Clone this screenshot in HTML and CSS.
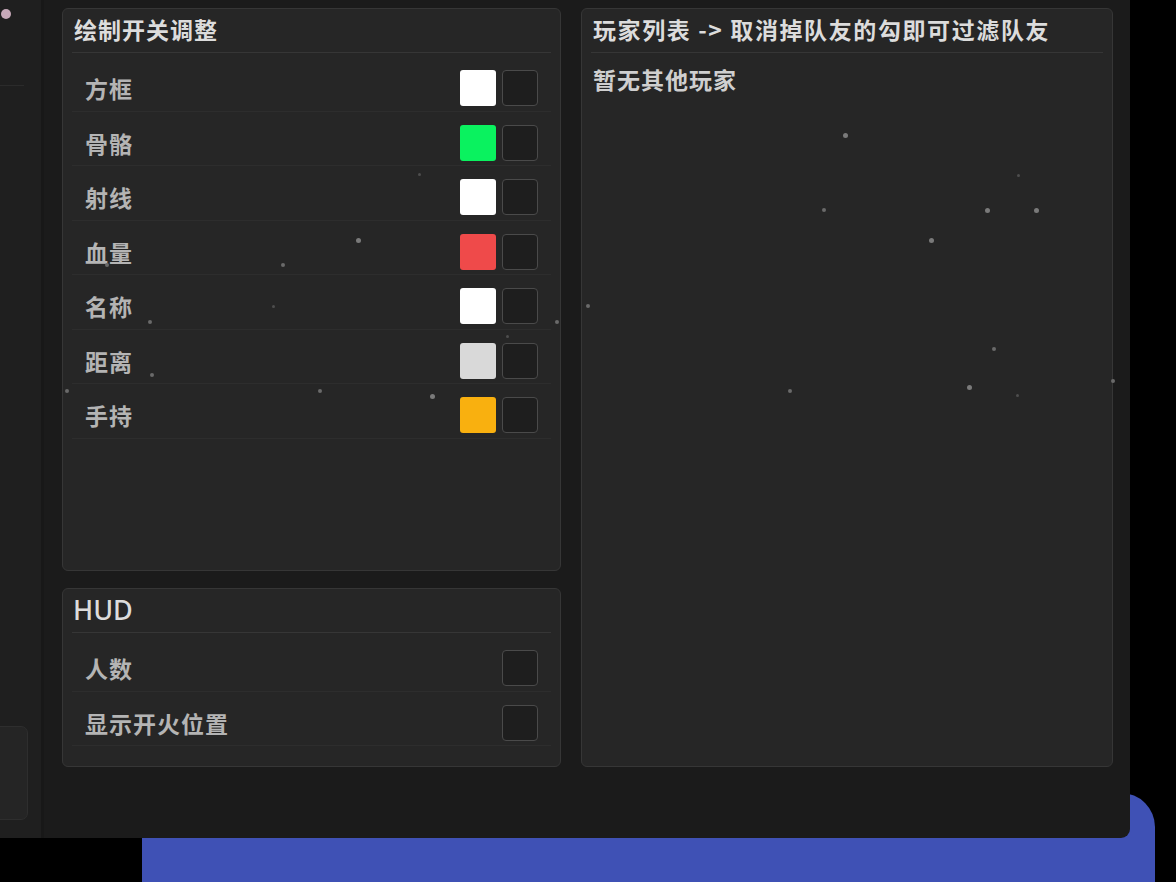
FILE: index.html
```html
<!DOCTYPE html>
<html lang="zh-CN">
<head>
<meta charset="utf-8">
<title>设置</title>
<link rel="stylesheet" href="styles.css">
</head>
<body>
<div class="stage">
  <div class="backcard"></div>
  <div class="window">
    <aside class="sidebar">
      <span class="sb-dot"></span>
      <span class="sb-divider"></span>
      <span class="sb-spacer"></span>
      <span class="sb-box"></span>
    </aside>
    <main class="content">
      <section class="panel panel-draw">
        <header class="panel-head"><h2 class="panel-title">绘制开关调整</h2></header>
        <ul class="rows">
          <li class="row"><span class="label">方框</span><span class="swatch" style="background:#ffffff"></span><span class="check"></span></li>
          <li class="row"><span class="label">骨骼</span><span class="swatch" style="background:#0af25f"></span><span class="check"></span></li>
          <li class="row"><span class="label">射线</span><span class="swatch" style="background:#ffffff"></span><span class="check"></span></li>
          <li class="row"><span class="label">血量</span><span class="swatch" style="background:#ef4a4a"></span><span class="check"></span></li>
          <li class="row"><span class="label">名称</span><span class="swatch" style="background:#ffffff"></span><span class="check"></span></li>
          <li class="row"><span class="label">距离</span><span class="swatch" style="background:#d9d9d9"></span><span class="check"></span></li>
          <li class="row"><span class="label">手持</span><span class="swatch" style="background:#f9b00f"></span><span class="check"></span></li>
        </ul>
      </section>
      <section class="panel panel-hud">
        <header class="panel-head"><h2 class="panel-title title-latin">HUD</h2></header>
        <ul class="rows">
          <li class="row"><span class="label">人数</span><span class="check"></span></li>
          <li class="row"><span class="label">显示开火位置</span><span class="check"></span></li>
        </ul>
      </section>
      <section class="panel panel-players">
        <header class="panel-head"><h2 class="panel-title title-wide">玩家列表 -&gt; 取消掉队友的勾即可过滤队友</h2></header>
        <p class="empty">暂无其他玩家</p>
      </section>
    </main>
    <div class="particles">
      <i class="p" style="left:845px;top:135px"></i>
      <i class="p sm" style="left:824px;top:210px"></i>
      <i class="p" style="left:987px;top:210px"></i>
      <i class="p" style="left:1036px;top:210px"></i>
      <i class="p" style="left:931px;top:240px"></i>
      <i class="p sm" style="left:994px;top:349px"></i>
      <i class="p" style="left:969px;top:387px"></i>
      <i class="p sm" style="left:790px;top:391px"></i>
      <i class="p sm" style="left:1113px;top:381px"></i>
      <i class="p xs" style="left:1019px;top:176px"></i>
      <i class="p xs" style="left:1018px;top:396px"></i>
      <i class="p" style="left:358px;top:240px"></i>
      <i class="p sm" style="left:283px;top:265px"></i>
      <i class="p sm" style="left:107px;top:265px"></i>
      <i class="p sm" style="left:150px;top:322px"></i>
      <i class="p xs" style="left:274px;top:307px"></i>
      <i class="p sm" style="left:152px;top:375px"></i>
      <i class="p sm" style="left:320px;top:391px"></i>
      <i class="p" style="left:432px;top:396px"></i>
      <i class="p sm" style="left:67px;top:391px"></i>
      <i class="p sm" style="left:557px;top:322px"></i>
      <i class="p sm" style="left:588px;top:306px"></i>
      <i class="p xs" style="left:508px;top:337px"></i>
      <i class="p xs" style="left:420px;top:175px"></i>
    </div>
  </div>
</div>
</body>
</html>
```
FILE: styles.css
```css
* { box-sizing: border-box; }
html, body { margin: 0; padding: 0; }
body {
  background: #000;
  width: 1176px;
  height: 882px;
  overflow: hidden;
  font-family: "Noto Sans CJK SC", "Noto Sans", sans-serif;
}
.stage {
  position: relative;
  width: 1176px;
  height: 882px;
  overflow: hidden;
}
.backcard {
  position: absolute;
  left: 142px;
  top: 793px;
  width: 1013px;
  height: 89px;
  background: #3f51b5;
  border-top-right-radius: 34px;
}
.window {
  position: relative;
  width: 1130px;
  height: 838px;
  background: #1b1b1b;
  border-bottom-right-radius: 9px;
  display: flex;
  overflow: hidden;
}
.sidebar {
  width: 44px;
  flex: none;
  background: #1f1f1f;
  border-right: 3px solid #181818;
  display: flex;
  flex-direction: column;
  overflow: hidden;
}
.sb-dot {
  width: 10px;
  height: 10px;
  border-radius: 50%;
  background: #c7a9b9;
  margin: 9px 0 0 1px;
}
.sb-divider {
  height: 1px;
  width: 24px;
  background: #2b2b2b;
  margin-top: 66px;
}
.sb-spacer { flex: 1; }
.sb-box {
  height: 94px;
  width: 48px;
  margin: 0 0 18px -20px;
  background: #252525;
  border: 1px solid #2e2e2e;
  border-radius: 7px;
}
.content {
  flex: 1;
  padding: 8px 17px 0 18px;
  display: grid;
  grid-template-columns: 499px 532px;
  grid-template-rows: 563px 179px;
  column-gap: 20px;
  row-gap: 17px;
  align-content: start;
}
.panel {
  background: #262626;
  border: 1px solid #363636;
  border-radius: 6px;
  padding: 0 9px;
}
.panel-players { grid-column: 2; grid-row: 1 / span 2; }
.panel-draw { grid-column: 1; grid-row: 1; }
.panel-hud { grid-column: 1; grid-row: 2; }
.panel-head {
  height: 44px;
  display: flex;
  align-items: center;
  padding-bottom: 3px;
  border-bottom: 1px solid #363636;
}
.panel-title {
  margin: 0 0 0 2px;
  font-size: 23px;
  font-weight: 700;
  color: #dcdcdc;
  line-height: 1;
  letter-spacing: 1px;
}
.title-wide { letter-spacing: 1.6px; }
.title-latin {
  font-family: "Noto Sans", "Noto Sans CJK SC", sans-serif;
  font-weight: 500;
  font-size: 27px;
  letter-spacing: 0;
  margin-left: 1px;
}
.rows {
  list-style: none;
  margin: 4px 0 0;
  padding: 0;
}
.row {
  display: flex;
  align-items: center;
  padding: 13px 13px 4.5px 13px;
  border-bottom: 1px solid #2d2d2d;
}
.label {
  flex: 1;
  font-size: 23px;
  font-weight: 700;
  color: #b4b4b4;
  line-height: 36px;
  letter-spacing: 1px;
}
.swatch {
  width: 36px;
  height: 36px;
  border-radius: 3px;
  margin-right: 6px;
}
.check {
  width: 36px;
  height: 36px;
  border-radius: 4px;
  background: #1e1e1e;
  border: 1.5px solid #4a4a4a;
}
.empty {
  margin: 10px 0 0 2px;
  font-size: 23px;
  font-weight: 700;
  color: #cfcfcf;
  line-height: 32px;
  letter-spacing: 1px;
}
.particles {
  position: absolute;
  inset: 0;
  pointer-events: none;
}
.p {
  position: absolute;
  width: 5px;
  height: 5px;
  margin: -2px 0 0 -2px;
  border-radius: 50%;
  background: #7a7a7a;
}
.p.sm { width: 4px; height: 4px; background: #6a6a6a; }
.p.xs { width: 3px; height: 3px; background: #4e4e4e; }
```
